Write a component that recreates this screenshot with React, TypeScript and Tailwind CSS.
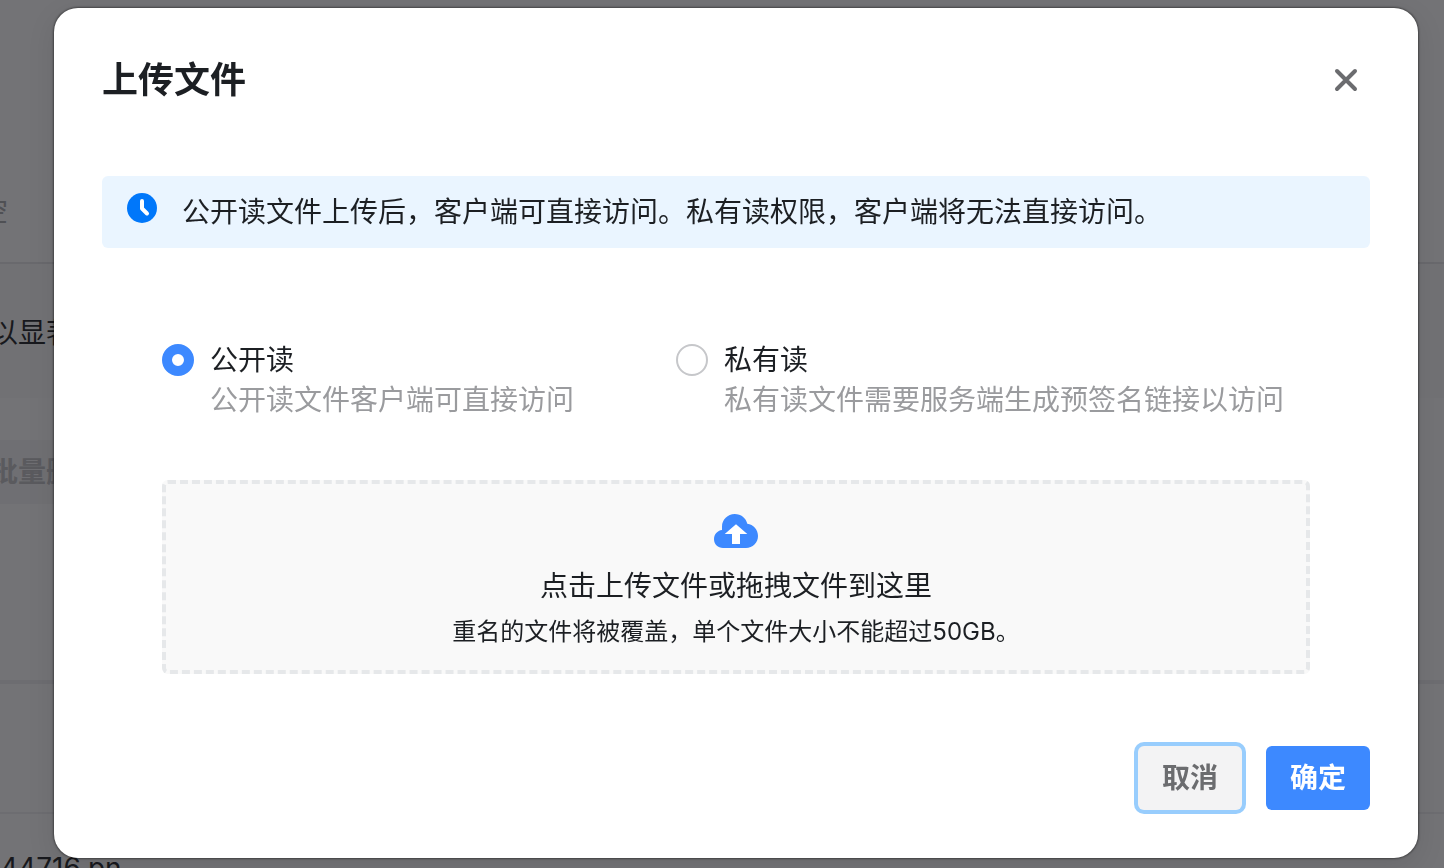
import { useState } from "react";

function CloseIcon() {
  return (
    <svg width="24" height="24" viewBox="0 0 24 24" fill="none" stroke="#6b6c6f" strokeWidth="4" strokeLinecap="round" aria-hidden="true">
      <path d="M3 3 21 21M21 3 3 21" />
    </svg>
  );
}

function ClockIcon() {
  return (
    <svg className="shrink-0" width="32" height="32" viewBox="0 0 32 32" aria-hidden="true">
      <circle cx="16" cy="16" r="15" fill="#0077fa" />
      <path d="M16 9V16.5L21 21.5" fill="none" stroke="#fff" strokeWidth="4" strokeLinecap="round" strokeLinejoin="round" />
    </svg>
  );
}

function CloudUploadIcon() {
  return (
    <svg width="44" height="34" viewBox="0 0 44 34" aria-hidden="true">
      <path
        d="M20.7 0C27 0 32 4 33.3 9.8C39.3 10.2 44 15.8 44 22C44 28.6 38.6 34 32 34H9C4 34 0 30 0 25.2C0 20.4 3.4 16.6 8 16V12.7C8 5.6 13.7 0 20.7 0Z"
        fill="#3d89ff"
      />
      <path d="M22 10.3 33.3 20H26V30H18V20H10.7Z" fill="#fff" />
    </svg>
  );
}

type OptionProps = {
  id: string;
  label: string;
  hint: string;
  checked: boolean;
  onSelect: () => void;
};

function AccessOption({ id, label, hint, checked, onSelect }: OptionProps) {
  return (
    <div className="flex items-start gap-4">
      <input
        id={id}
        type="radio"
        name="access"
        checked={checked}
        onChange={onSelect}
        className="mt-1 size-8 shrink-0 appearance-none rounded-full border-2 border-[#c6c7ca] bg-white checked:border-[10px] checked:border-[#3d89ff]"
      />
      <label htmlFor={id} className="flex flex-col text-[28px] leading-10">
        <span>{label}</span>
        <span className="text-[#9a9b9e]">{hint}</span>
      </label>
    </div>
  );
}

function BackgroundPage() {
  return (
    <div aria-hidden="true" className="bg-white text-[28px] leading-10">
      <div className="flex h-[264px] items-end border-b-2 border-[#e6e6e8] pb-[30px]">
        <span className="-ml-5 text-[#a6a7ab]">空</span>
      </div>
      <div className="flex h-[134px] items-center bg-[#fbfbfb] pt-1">
        <span className="-ml-[10px]">以显著</span>
      </div>
      <div className="flex h-[286px] flex-col border-b-4 border-[#f0f0f2] pt-[42px]">
        <div className="flex h-16">
          <div className="flex items-center bg-[#f6f6f7] pr-6">
            <span className="-ml-[10px] font-semibold text-[#c0c1c4]">批量删除</span>
          </div>
        </div>
      </div>
      <div className="h-[130px] border-b-2 border-[#f0f0f2]" />
      <div className="flex pt-[34px]">
        <span>44716.pn</span>
      </div>
    </div>
  );
}

export default function App() {
  const [access, setAccess] = useState("public");

  return (
    <div className="relative h-screen overflow-hidden font-[Inter,'Noto_Sans_CJK_SC',sans-serif] text-[#1c1f23]">
      <BackgroundPage />
      <div className="fixed inset-0 flex items-start bg-[#16161a]/60 pt-2 pr-[26px] pl-[54px]">
        <section
          role="dialog"
          aria-labelledby="upload-title"
          className="flex-1 rounded-3xl bg-white p-12 shadow-[0_0_2px_1px_rgba(0,0,0,0.4),0_8px_28px_rgba(0,0,0,0.1)]"
        >
          <header className="flex items-center justify-between pr-3">
            <h2 id="upload-title" className="text-4xl leading-[48px] font-semibold">
              上传文件
            </h2>
            <button type="button" aria-label="关闭">
              <CloseIcon />
            </button>
          </header>

          <div className="mt-[72px] flex items-start gap-6 rounded-md bg-[#eaf5ff] px-6 py-4">
            <ClockIcon />
            <p className="text-[28px] leading-10">公开读文件上传后，客户端可直接访问。私有读权限，客户端将无法直接访问。</p>
          </div>

          <div className="px-[60px] pt-[92px]">
            <div className="flex gap-[102px]">
              <AccessOption
                id="access-public"
                label="公开读"
                hint="公开读文件客户端可直接访问"
                checked={access === "public"}
                onSelect={() => setAccess("public")}
              />
              <AccessOption
                id="access-private"
                label="私有读"
                hint="私有读文件需要服务端生成预签名链接以访问"
                checked={access === "private"}
                onSelect={() => setAccess("private")}
              />
            </div>

            <button
              type="button"
              className="mt-[60px] flex w-full flex-col items-center rounded-md border-4 border-dashed border-[#e6e8ea] bg-[#f9f9f9] pt-[30px] pb-5"
            >
              <CloudUploadIcon />
              <span className="mt-[18px] text-[28px] leading-10">点击上传文件或拖拽文件到这里</span>
              <span className="mt-2 text-2xl leading-9">重名的文件将被覆盖，单个文件大小不能超过50GB。</span>
            </button>
          </div>

          <footer className="mt-[72px] flex justify-end gap-6 text-[28px] leading-10 font-semibold">
            <button type="button" className="rounded-md bg-[#f3f3f4] px-6 py-3 text-[#6b6c6f] ring-4 ring-[#98cdfd]">
              取消
            </button>
            <button type="button" className="rounded-md bg-[#3d89ff] px-6 py-3 text-white">
              确定
            </button>
          </footer>
        </section>
      </div>
    </div>
  );
}
